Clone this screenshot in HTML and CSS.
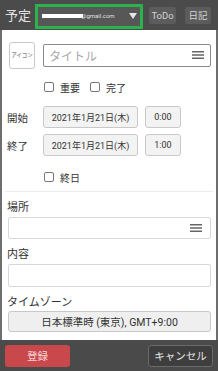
FILE: index.html
```html
<!DOCTYPE html>
<html lang="ja">
<head>
<meta charset="utf-8">
<link rel="stylesheet" href="styles.css">
</head>
<body>
<div class="app">
  <header class="hdr">
    <span class="hdr-title">予定</span>
    <div class="account">
      <span class="redact"></span><span class="mail">@gmail.com</span>
      <svg class="tri" width="8" height="6" viewBox="0 0 8 6"><polygon points="0,0 8,0 4,6" fill="#e6e6e6"/></svg>
    </div>
    <span class="hbtn todo">ToDo</span>
    <span class="hbtn diary">日記</span>
  </header>
  <main class="main">
    <div class="row-title">
      <div class="iconbox">アイコン</div>
      <div class="title-input">
        <span class="ph">タイトル</span>
        <svg class="menu" width="12" height="8" viewBox="0 0 12 8"><path d="M0 0.75H12M0 4H12M0 7.25H12" stroke="#666" stroke-width="1.3"/></svg>
      </div>
    </div>
    <div class="checks">
      <label class="chk"><span class="box"></span>重要</label>
      <label class="chk"><span class="box"></span>完了</label>
    </div>
    <div class="dt-row first">
      <span class="dt-label">開始</span>
      <span class="date-btn">2021年1月21日(木)</span>
      <span class="time-btn">0:00</span>
    </div>
    <div class="dt-row">
      <span class="dt-label">終了</span>
      <span class="date-btn">2021年1月21日(木)</span>
      <span class="time-btn">1:00</span>
    </div>
    <div class="checks allday">
      <label class="chk"><span class="box"></span>終日</label>
    </div>
    <div class="sep"></div>
    <div class="flabel">場所</div>
    <div class="field place">
      <svg class="menu" width="12" height="8" viewBox="0 0 12 8"><path d="M0 0.75H12M0 4H12M0 7.25H12" stroke="#666" stroke-width="1.3"/></svg>
    </div>
    <div class="flabel">内容</div>
    <div class="field content"></div>
    <div class="flabel">タイムゾーン</div>
    <div class="tz-btn">日本標準時 (東京), GMT+9:00</div>
  </main>
  <footer class="ftr">
    <span class="fbtn ok">登録</span>
    <span class="fbtn cancel">キャンセル</span>
  </footer>
</div>
</body>
</html>
```
FILE: styles.css
```css
* { box-sizing: border-box; }
html, body { margin: 0; padding: 0; }
body {
  width: 218px;
  height: 371px;
  overflow: hidden;
  font-family: Roboto, "Noto Sans CJK JP", sans-serif;
  color: #333;
  background: #4a4a4a;
}
.app {
  display: flex;
  flex-direction: column;
  height: 371px;
}
.hdr {
  height: 30px;
  flex: none;
  display: flex;
  align-items: center;
  background: #4b4b4b;
  padding-left: 5px;
}
.hdr-title {
  font-size: 13px;
  color: #e2e2e2;
  line-height: 1;
}
.account {
  margin-left: 4px;
  width: 108px;
  height: 25px;
  margin-top: 2px;
  border: 3px solid #2bb24c;
  background: #575757;
  display: flex;
  align-items: center;
  padding: 0 3px 0 4px;
}
.redact {
  width: 41px;
  height: 4px;
  background: #fff;
  flex: none;
}
.mail {
  font-size: 6px;
  color: #e0e0e0;
  margin-left: -2px;
  line-height: 1;
}
.tri { margin-left: auto; }
.hbtn {
  height: 17px;
  background: #5c5c5c;
  color: #d4d4d4;
  border-radius: 2px;
  display: flex;
  align-items: center;
  justify-content: center;
  font-size: 9.5px;
}
.todo { width: 27px; margin-left: 6px; }
.diary { width: 26px; margin-left: 9px; }
.main {
  flex: 1;
  overflow: hidden;
  background: #fff;
  border-left: 2px solid #6e6e6e;
  border-right: 2px solid #6e6e6e;
  padding: 12px 5px 0 5px;
  display: flex;
  flex-direction: column;
}
.row-title {
  display: flex;
  align-items: center;
  height: 26px;
}
.iconbox {
  width: 26px;
  height: 27px;
  margin-left: 2px;
  border: 1px solid #c8c8c8;
  border-radius: 3px;
  font-size: 5.5px;
  color: #555;
  display: flex;
  align-items: center;
  justify-content: center;
  white-space: nowrap;
}
.title-input {
  margin-left: 8px;
  flex: 1;
  height: 23px;
  border: 1px solid #8a8a8a;
  border-radius: 2px;
  display: flex;
  align-items: center;
  padding: 0 6px 0 5px;
}
.ph {
  font-size: 12px;
  color: #a8a8a8;
}
.menu { margin-left: auto; }
.checks {
  display: flex;
  height: 14px;
  align-items: center;
  margin-top: 12px;
  padding-left: 37px;
  gap: 10px;
}
.chk {
  display: flex;
  align-items: center;
  font-size: 10px;
  color: #333;
  gap: 6px;
}
.box {
  width: 10px;
  height: 10px;
  border: 1px solid #777;
  border-radius: 2px;
  background: #fff;
}
.dt-row {
  display: flex;
  align-items: center;
  height: 22px;
  margin-top: 6px;
}
.dt-row.first { margin-top: 12px; }
.dt-label {
  width: 36px;
  font-size: 10.5px;
  color: #333;
}
.date-btn, .time-btn {
  height: 22px;
  background: #f3f3f3;
  border: 1px solid #c8c8c8;
  border-radius: 3px;
  display: flex;
  align-items: center;
  justify-content: center;
  font-size: 9px;
  color: #333;
}
.date-btn { width: 95px; }
.time-btn { width: 36px; margin-left: 7px; }
.checks.allday { margin-top: 14px; }
.sep {
  height: 1px;
  background: #ececec;
  margin: 7px -2px 0 -2px;
  flex: none;
}
.flabel {
  font-size: 11px;
  line-height: 14px;
  color: #333;
  margin-top: 9px;
  flex: none;
}
.field {
  flex: none;
  margin-top: 2px;
  margin-left: 1px;
  height: 22px;
  border: 1px solid #d8d8d8;
  border-radius: 2px;
  display: flex;
  align-items: center;
  padding-right: 8px;
}
.field.content { height: 23px; }
.tz-btn {
  flex: none;
  margin-top: 1px;
  margin-left: 1px;
  height: 21px;
  background: #efefef;
  border: 1px solid #c8c8c8;
  border-radius: 3px;
  display: flex;
  align-items: center;
  justify-content: center;
  font-size: 10.5px;
  color: #333;
}
.ftr {
  height: 31px;
  flex: none;
  background: #4a4a4a;
  display: flex;
  align-items: center;
  justify-content: space-between;
  padding: 0 5px;
}
.fbtn {
  height: 22px;
  width: 65px;
  border-radius: 3px;
  display: flex;
  align-items: center;
  justify-content: center;
  font-size: 10.5px;
}
.ok {
  background: #c9484b;
  color: #f6d6d6;
}
.cancel {
  background: #3e3e3e;
  border: 1px solid #6a6a6a;
  color: #e4e4e4;
}
```
